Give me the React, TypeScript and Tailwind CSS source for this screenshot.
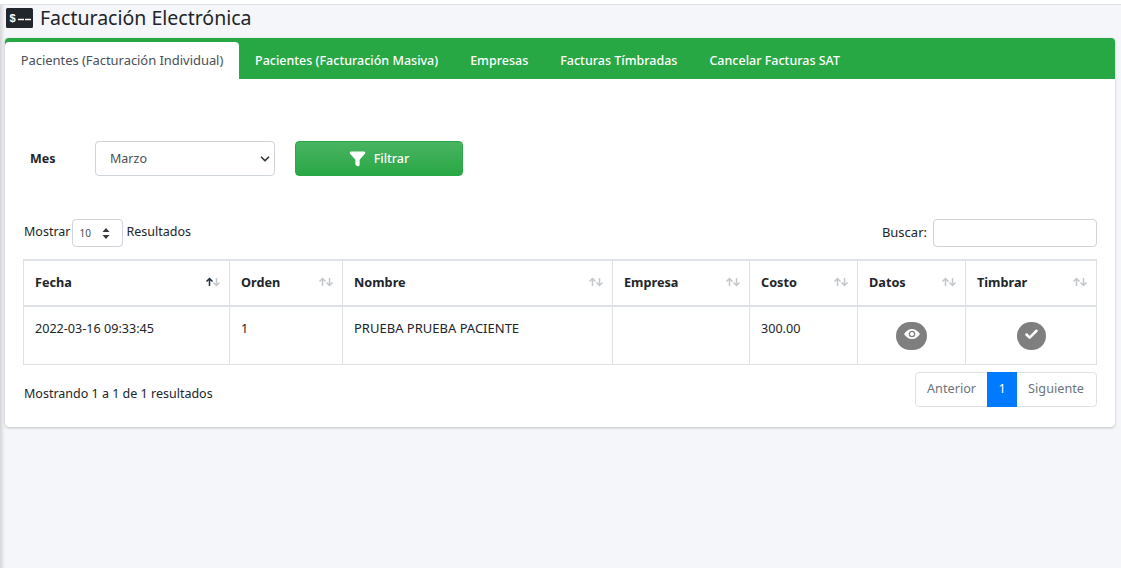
import { Filter, Check, ChevronDown } from "lucide-react";

const tabs = ["Pacientes (Facturación Masiva)", "Empresas", "Facturas Tímbradas", "Cancelar Facturas SAT"];

const columns = [
    { name: "Fecha", width: "w-[206px]", active: true },
    { name: "Orden", width: "w-[113px]" },
    { name: "Nombre", width: "w-[270px]" },
    { name: "Empresa", width: "w-[137px]" },
    { name: "Costo", width: "w-[108px]" },
    { name: "Datos", width: "w-[108px]" },
    { name: "Timbrar", width: "w-[131px]" },
];

function SortArrows({ active }: { active?: boolean }) {
    return (
        <svg width="16" height="10" viewBox="0 0 16 10" className="absolute right-[8px] top-[16px]" fill="none" strokeWidth="1.5">
            <path d="M4.5 9V1.5M1.5 4.5l3-3 3 3" stroke={active ? "#1f2d3d" : "#c4c7ca"} />
            <path d="M11.5 1v7.5M8.5 5.5l3 3 3-3" stroke="#c4c7ca" />
        </svg>
    );
}

export default function App() {
    return (
        <div className="h-[568px] overflow-hidden bg-[#f4f6f9] text-[14px] text-[#212529] font-['Noto_Sans','Open_Sans',sans-serif] flex">
            <div className="w-[5px] shrink-0 bg-gradient-to-r from-[#d5d6d8] to-[#f4f6f9]" />
            <div className="flex-1 min-w-0">
                <div className="-ml-[5px] h-[5px] bg-white border-b border-[#dee2e6]" />
                <div className="h-[33px] flex items-center gap-[7px] pl-px pb-[8px]">
                    <svg width="27" height="20" viewBox="0 0 27 20" className="shrink-0">
                        <rect width="27" height="20" rx="1.5" fill="#20262c" />
                        <text x="3.5" y="14" fontSize="11" fontWeight="700" fill="#fff" fontFamily="Liberation Sans">$</text>
                        <path d="M12 11.5h6M19 11.5h6" stroke="#fff" strokeWidth="1.6" />
                    </svg>
                    <h1 className="text-[19.5px] leading-none text-[#212529]">Facturación Electrónica</h1>
                </div>
                <div className="w-[1110px] h-[389px] bg-white rounded-[4px] shadow-[0_0_1px_rgba(0,0,0,0.13),0_1px_3px_rgba(0,0,0,0.2)]">
                    <div className="h-[41px] bg-[#28a745] rounded-t-[4px] flex items-end">
                        <div className="w-[234px] h-[37px] bg-white rounded-t-[4px] flex items-center justify-center text-[#495057] text-[13px] tracking-[-0.05px]">
                            Pacientes (Facturación Individual)
                        </div>
                        {tabs.map((tab) => (
                            <div key={tab} className="h-[37px] px-[16px] pt-px flex items-center text-white text-[12.5px] font-medium">
                                {tab}
                            </div>
                        ))}
                    </div>

                    <div className="flex items-center pt-[62px] pl-[25px]">
                        <label className="w-[65px] pt-px font-bold text-[12.5px]">Mes</label>
                        <div className="relative w-[180px] h-[35px] border border-[#ced4da] rounded-[4px] flex items-center pl-[14px] pt-px text-[#495057] text-[12.5px]">
                            Marzo
                            <ChevronDown className="absolute right-[2px] top-[10px] w-[14px] h-[14px] text-[#343a40]" strokeWidth={3} />
                        </div>
                        <button className="ml-[20px] w-[168px] h-[35px] rounded-[4px] bg-gradient-to-b from-[#48b461] to-[#28a745] border border-[#28a745] text-white flex items-center justify-center gap-[8px] text-[12.5px] font-medium">
                            <Filter className="w-[17px] h-[17px]" fill="white" />
                            <span className="pt-px">Filtrar</span>
                        </button>
                    </div>

                    <div className="px-[18px]">
                        <div className="flex items-start justify-between mt-[43px] h-[28px]">
                            <div className="flex items-start text-[12.5px] leading-[25px] pl-px">
                                Mostrar
                                <div className="ml-px mr-[4px] w-[51px] h-[28px] border border-[#ced4da] rounded-[4px] flex items-center justify-between pl-[7px] pr-[12px] text-[10px] text-[#495057]">
                                    10
                                    <svg width="8" height="11" viewBox="0 0 8 11" fill="#343a40">
                                        <path d="M4 0l3.5 4h-7zM4 11L.5 7h7z" />
                                    </svg>
                                </div>
                                Resultados
                            </div>
                            <div className="flex items-start text-[13px] leading-[26px] gap-[6px]">
                                Buscar:
                                <div className="w-[164px] h-[28px] border border-[#ced4da] rounded-[4px]" />
                            </div>
                        </div>

                        <table className="mt-[12px] w-[1073px] table-fixed border-collapse text-[12.6px]">
                            <thead>
                                <tr className="h-[46px]">
                                    {columns.map((col) => (
                                        <th key={col.name} className={`${col.width} relative border border-[#dee2e6] border-y-2 px-[11px] text-left font-bold text-[12.7px]`}>
                                            {col.name}
                                            <SortArrows active={col.active} />
                                        </th>
                                    ))}
                                </tr>
                            </thead>
                            <tbody>
                                <tr className="h-[58px] align-top">
                                    <td className="border border-[#dee2e6] px-[11px] pt-[13px]">2022-03-16 09:33:45</td>
                                    <td className="border border-[#dee2e6] px-[11px] pt-[13px]">1</td>
                                    <td className="border border-[#dee2e6] px-[11px] pt-[12px] text-[13px]">PRUEBA PRUEBA PACIENTE</td>
                                    <td className="border border-[#dee2e6]" />
                                    <td className="border border-[#dee2e6] px-[11px] pt-[13px]">300.00</td>
                                    <td className="border border-[#dee2e6] pt-[15px]">
                                        <div className="mx-auto w-[31px] h-[28px] rounded-full bg-[#7f7f7f] flex items-center justify-center">
                                            <svg width="16" height="10" viewBox="0 0 16 10" className="mb-[4px]">
                                                <path d="M0 5C2 2 4.800 0 8 0s6 2 8 5c-2 3-4.800 5-8 5S2 8 0 5z" fill="#fff" />
                                                <circle cx="8" cy="5" r="2.6" fill="none" stroke="#7f7f7f" strokeWidth="1.300" />
                                            </svg>
                                        </div>
                                    </td>
                                    <td className="border border-[#dee2e6] pt-[15px]">
                                        <div className="mx-auto w-[29px] h-[28px] rounded-full bg-[#7f7f7f] flex items-center justify-center">
                                            <Check className="w-[15px] h-[15px] text-white mb-[3px]" strokeWidth={4} />
                                        </div>
                                    </td>
                                </tr>
                            </tbody>
                        </table>

                        <div className="flex items-center justify-between mt-[7px] w-[1074px]">
                            <span className="text-[12.5px] pt-[11px] pl-px">Mostrando 1 a 1 de 1 resultados</span>
                            <div className="flex h-[35px] border border-[#dee2e6] rounded-[4px] text-[#6c757d] text-[12.7px] items-stretch">
                                <span className="px-[11px] flex items-center">Anterior</span>
                                <span className="w-[30px] -my-px bg-[#007bff] text-white flex items-center justify-center">1</span>
                                <span className="pl-[11px] pr-[12px] flex items-center">Siguiente</span>
                            </div>
                        </div>
                    </div>
                </div>
            </div>
        </div>
    );
}
